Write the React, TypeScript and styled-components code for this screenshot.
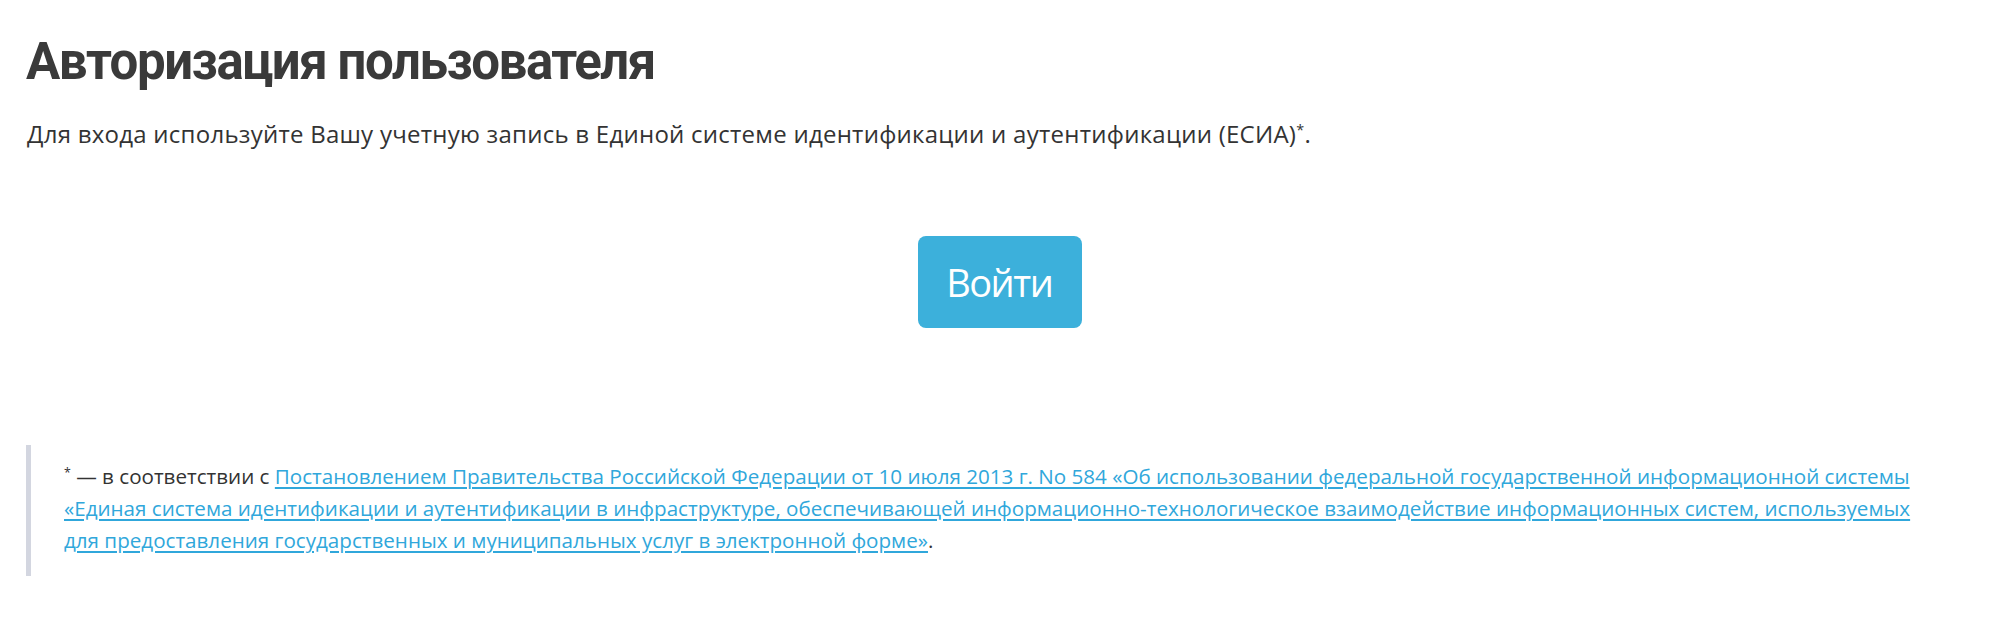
import React from "react";
import styled, { createGlobalStyle } from "styled-components";

const GlobalStyle = createGlobalStyle`
  html, body {
    margin: 0;
    padding: 0;
    background: #ffffff;
  }
  body {
    font-family: "Open Sans", "Noto Sans", sans-serif;
    color: #333333;
  }
`;

const Page = styled.main`
  display: flex;
  flex-direction: column;
  padding: 32px 25px 0 25px;
  height: 644px;
  box-sizing: border-box;
`;

const Title = styled.h1`
  margin: 0 0 0 1px;
  font-family: Roboto, "Liberation Sans", sans-serif;
  font-weight: 700;
  font-size: 51px;
  line-height: 60px;
  color: #3a3a3a;
  letter-spacing: -1.45px;
`;

const Lead = styled.p`
  margin: 26px 0 0 2px;
  font-size: 24px;
  line-height: 32px;
  letter-spacing: 0.25px;
  color: #333333;
`;

const Star = styled.sup`
  font-size: 0.6em;
  line-height: 0;
  vertical-align: 0.55em;
`;

const ButtonRow = styled.div`
  display: flex;
  justify-content: center;
  margin-top: 86px;
`;

const LoginButton = styled.button`
  width: 164px;
  height: 92px;
  padding: 0;
  border: none;
  border-radius: 8px;
  background: #3cb0db;
  color: #ffffff;
  font-family: "Open Sans", "Noto Sans", sans-serif;
  font-size: 38px;
  letter-spacing: -1.5px;
  text-indent: -1.5px;
  cursor: pointer;
`;

const Note = styled.blockquote`
  margin: 117px 0 0 1px;
  padding: 15px 0 20px 33px;
  border-left: 5px solid #d3d6e0;
  font-size: 20.6px;
  line-height: 32px;
  color: #333333;
`;

const NoteLink = styled.a`
  color: #30a7db;
  text-decoration: underline;
  text-underline-offset: 3px;
`;

export default function App() {
  return (
    <>
      <GlobalStyle />
      <Page>
        <Title>Авторизация пользователя</Title>
        <Lead>
          Для входа используйте Вашу учетную запись в Единой системе идентификации и аутентификации (ЕСИА)
          <Star>*</Star>.
        </Lead>
        <ButtonRow>
          <LoginButton type="button">Войти</LoginButton>
        </ButtonRow>
        <Note>
          <Star>*</Star> — в соответствии с{" "}
          <NoteLink href="#">
            Постановлением Правительства Российской Федерации от 10 июля 2013 г. No 584 «Об использовании федеральной государственной информационной системы
            <br />
            «Единая система идентификации и аутентификации в инфраструктуре, обеспечивающей информационно-технологическое взаимодействие информационных систем, используемых
            <br />
            для предоставления государственных и муниципальных услуг в электронной форме»
          </NoteLink>
          .
        </Note>
      </Page>
    </>
  );
}
